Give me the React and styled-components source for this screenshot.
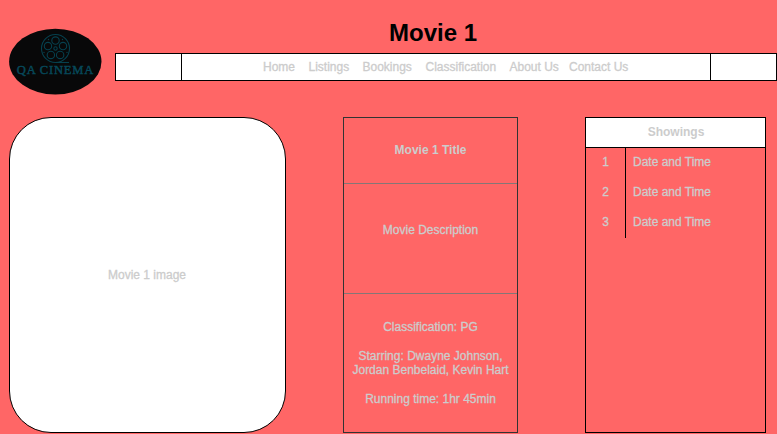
import React from "react";
import styled, { createGlobalStyle } from "styled-components";

const GlobalStyle = createGlobalStyle`
  * { box-sizing: border-box; }
  body {
    margin: 0;
    background: #ff6666;
    color: #cccccc;
    font: 12px/14.4px "Liberation Sans", Arial, sans-serif;
    overflow: hidden;
  }
`;

const Page = styled.div`
  width: 777px;
  height: 434px;
  display: flex;
  flex-direction: column;
`;

const Header = styled.header`
  display: flex;
  height: 117px;
  padding-left: 9px;
`;

const Logo = styled.svg`
  width: 93px;
  height: 67px;
  margin: 28px 13px 0 0;
  flex: none;
`;

const HeaderMain = styled.div`
  width: 662px;
`;

const Title = styled.h1`
  margin: 0;
  height: 53px;
  padding: 19px 0 0 274px;
  color: #000;
  font-size: 24px;
  line-height: 28px;
`;

const Nav = styled.nav`
  display: flex;
  height: 28px;
  border: 1px solid #000;
  background: #fff;
`;

const NavSide = styled.div`
  width: 65px;
`;

const NavLinks = styled.div`
  display: flex;
  flex: 1;
  align-items: center;
  border: solid #000;
  border-width: 0 1px;
  padding-left: 81px;
  white-space: nowrap;
`;

const NavLink = styled.a`
  width: ${(p) => p.$width}px;
  -webkit-text-stroke: 0.3px #cccccc;
`;

const Content = styled.main`
  display: flex;
  height: 316px;
  padding-left: 9px;
`;

const Poster = styled.div`
  display: flex;
  align-items: center;
  justify-content: center;
  width: 277px;
  padding-right: 1px;
  border: 1px solid #000;
  border-radius: 42px;
  background: #fff;
  -webkit-text-stroke: 0.3px #cccccc;
`;

const Details = styled.section`
  display: flex;
  flex-direction: column;
  width: 175px;
  margin: 0 67px 0 57px;
  border: 1px solid #333;
  text-align: center;
`;

const Detail = styled.div`
  display: flex;
  flex-direction: column;
  align-items: center;
  justify-content: center;
  gap: 14.4px;
  height: ${(p) => p.$height}px;
  padding-bottom: ${(p) => p.$lift || 0}px;
  font-weight: ${(p) => (p.$bold ? 700 : 400)};
  -webkit-text-stroke: ${(p) => (p.$bold ? 0 : 0.3)}px #cccccc;

  & + & { border-top: 1px solid #857676; }
`;

const Line = styled.p`
  margin: 0;
  white-space: nowrap;
`;

const Showings = styled.section`
  width: 181px;
  border: 1px solid #000;
`;

const ShowingsTitle = styled.h2`
  display: flex;
  align-items: center;
  justify-content: center;
  height: 30px;
  margin: 0;
  padding-left: 1px;
  border-bottom: 1px solid #000;
  background: #fff;
  font-size: 12px;
`;

const Showing = styled.div`
  display: flex;
  height: 30px;
  line-height: 29px;
  -webkit-text-stroke: 0.3px #cccccc;
`;

const Index = styled.div`
  width: 40px;
  border-right: 1px solid #000;
  text-align: center;
`;

const Time = styled.div`
  padding-left: 7px;
`;

const links = [
  ["Home", 45.5],
  ["Listings", 54],
  ["Bookings", 63],
  ["Classification", 84],
  ["About Us", 59.5],
  ["Contact Us", 60],
];

const holes = [0, 1, 2, 3, 4].map((i) => {
  const a = ((-90 + i * 72) * Math.PI) / 180;
  return [46.5 + Math.cos(a) * 7.9, 20.5 + Math.sin(a) * 7.9];
});

const CinemaLogo = () => (
  <Logo viewBox="0 0 93 67">
    <ellipse cx="46.3" cy="33.6" rx="46.2" ry="32.9" fill="#080809" />
    <g fill="none" stroke="#06404e" strokeWidth="1.1">
      <circle cx="46.5" cy="20.5" r="14" />
      {holes.map(([x, y], i) => (
        <circle key={i} cx={x} cy={y} r="3.7" />
      ))}
      <circle cx="46.5" cy="20.5" r="1.7" />
      <path d="M46.5 34.5H60" />
    </g>
    <g fill="#06404e">
      <circle cx="39.5" cy="11.5" r="0.7" />
      <circle cx="53.5" cy="11.5" r="0.7" />
      <circle cx="35" cy="24.5" r="0.7" />
      <circle cx="58" cy="24.5" r="0.7" />
    </g>
    <text
      x="7.8"
      y="46.3"
      textLength="76.5"
      fill="#06485a"
      stroke="#06485a"
      strokeWidth="0.45"
      fontFamily="Liberation Serif, serif"
      fontSize="12.6"
    >
      QA CINEMA
    </text>
  </Logo>
);

export default function App() {
  return (
    <>
      <GlobalStyle />
      <Page>
        <Header>
          <CinemaLogo />
          <HeaderMain>
            <Title>Movie 1</Title>
            <Nav>
              <NavSide />
              <NavLinks>
                {links.map(([label, width]) => (
                  <NavLink key={label} $width={width}>{label}</NavLink>
                ))}
              </NavLinks>
              <NavSide />
            </Nav>
          </HeaderMain>
        </Header>
        <Content>
          <Poster>Movie 1 image</Poster>
          <Details>
            <Detail $height={65} $bold>Movie 1 Title</Detail>
            <Detail $height={110} $lift={16}>
              <Line>Movie Description</Line>
            </Detail>
            <Detail $height={139}>
              <Line>Classification: PG</Line>
              <Line>
                Starring: Dwayne Johnson,
                <br />
                Jordan Benbelaid, Kevin Hart
              </Line>
              <Line>Running time: 1hr 45min</Line>
            </Detail>
          </Details>
          <Showings>
            <ShowingsTitle>Showings</ShowingsTitle>
            {[1, 2, 3].map((n) => (
              <Showing key={n}>
                <Index>{n}</Index>
                <Time>Date and Time</Time>
              </Showing>
            ))}
          </Showings>
        </Content>
      </Page>
    </>
  );
}
